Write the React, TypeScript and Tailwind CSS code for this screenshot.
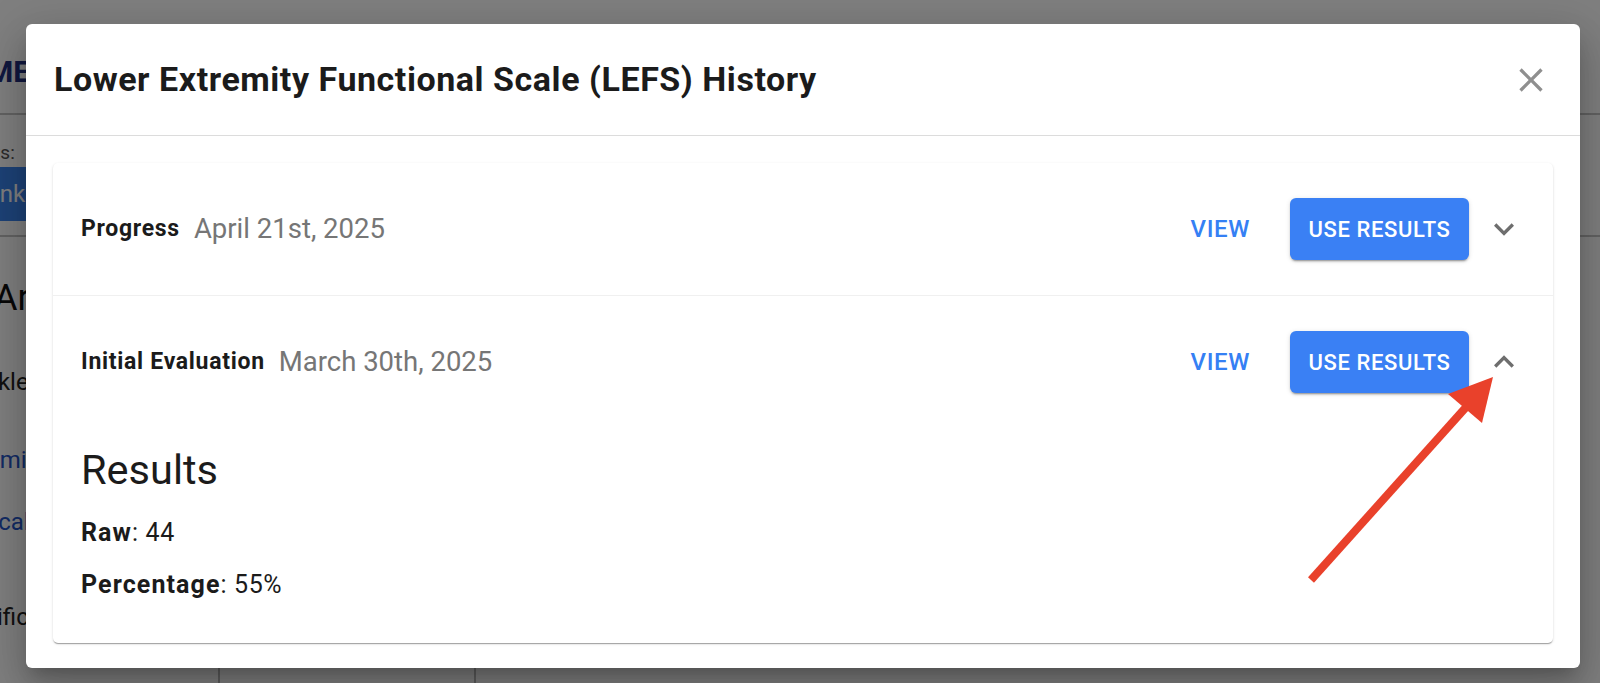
import React from "react";

const ExpandMore = ({ up = false }: { up?: boolean }) => (
  <svg viewBox="0 0 24 24" className={up ? "w-[40px] h-[40px] rotate-180" : "w-[40px] h-[40px]"} fill="#6e6e6e">
    <path d="M16.59 8.59 12 13.17 7.41 8.59 6 10l6 6 6-6z" />
  </svg>
);

const CloseIcon = () => (
  <svg viewBox="0 0 24 24" className="w-[40px] h-[40px]" fill="#8f8f8f">
    <path d="M19 6.41 17.59 5 12 10.59 6.41 5 5 6.41 10.59 12 5 17.59 6.41 19 12 13.41 17.59 19 19 17.59 13.41 12z" />
  </svg>
);

function RowHeader({ label, date, open }: { label: string; date: string; open?: boolean }) {
  return (
    <div className="flex items-center h-[132px] pl-[28px] pr-[29px]">
      <span className="text-[23px] font-bold tracking-[0.7px] text-[#1b1b1b]">{label}</span>
      <span className="ml-[14px] text-[27.5px] text-[#767676]">{date}</span>
      <div className="flex-1" />
      <button className="text-[24px] font-medium tracking-[0.6px] text-[#3580f4]">VIEW</button>
      <button className="ml-[40px] h-[62px] w-[179px] rounded-[6px] bg-[#3a80f4] text-white text-[22px] font-medium tracking-[0.6px] shadow-[0_3px_1px_-2px_rgba(0,0,0,0.2),0_2px_2px_0_rgba(0,0,0,0.14),0_1px_5px_0_rgba(0,0,0,0.12)]">
        USE RESULTS
      </button>
      <div className="ml-[15px] flex items-center justify-center">
        <ExpandMore up={open} />
      </div>
    </div>
  );
}

export default function App() {
  return (
    <div className="relative w-[1600px] h-[683px] overflow-hidden bg-white" style={{ fontFamily: "Roboto, 'Noto Sans', sans-serif" }}>
      {/* background page */}
      <div className="flex flex-col">
        <div className="h-[115px] flex items-center border-b-2 border-[#c4c4c4]">
          <span className="ml-[-13px] mt-[30px] text-[30px] leading-[36px] font-bold text-[#22307e]">MEA</span>
        </div>
        <div className="h-[122px] flex flex-col border-b-2 border-[#c4c4c4]">
          <span className="ml-[-35px] mt-[26px] text-[19px] leading-[24px] text-[#555]">Parts:</span>
          <div className="mt-[2px] h-[54px] w-[60px] flex items-center bg-[#3a84ee] overflow-hidden">
            <span className="ml-[-16px] text-[24px] text-white">Ankle</span>
          </div>
        </div>
        <div className="flex flex-col items-start">
          <span className="ml-[-6px] mt-[39px] text-[36px] leading-[44px] text-[#111]">Arthro</span>
          <span className="ml-[-31px] mt-[46px] text-[24px] leading-[32px] text-[#222]">Ankle</span>
          <span className="ml-[-19px] mt-[46px] text-[24px] leading-[32px] text-[#2657c9]">Limit</span>
          <span className="ml-[-16px] mt-[30px] text-[24px] leading-[32px] text-[#2657c9]">Scale</span>
          <span className="ml-[-56px] mt-[63px] text-[24px] leading-[32px] text-[#222]">Specific</span>
          <div className="ml-[218px] mt-[29px] h-[40px] w-[258px] rounded-[6px] border-2 border-[#bbb]" />
        </div>
      </div>

      {/* overlay */}
      <div className="absolute inset-0 bg-black/50" />

      {/* dialog */}
      <div className="absolute inset-0 pl-[26px] pt-[24px]">
        <div className="w-[1554px] h-[644px] bg-white rounded-[6px] flex flex-col shadow-[0_11px_15px_-7px_rgba(0,0,0,0.2),0_24px_38px_3px_rgba(0,0,0,0.14),0_9px_46px_8px_rgba(0,0,0,0.12)]">
          <div className="h-[112px] flex items-center justify-between pl-[28px] pr-[29px] border-b border-[#dcdcdc]">
            <h2 className="text-[34px] font-bold tracking-[0.55px] text-[#1b1b1b]">Lower Extremity Functional Scale (LEFS) History</h2>
            <CloseIcon />
          </div>
          <div className="px-[27px] pt-[27px]">
            <div className="rounded-[5px] bg-white shadow-[0_2px_1px_-1px_rgba(0,0,0,0.2),0_1px_1px_0_rgba(0,0,0,0.14),0_1px_3px_0_rgba(0,0,0,0.12)]">
              <div className="border-b border-[#f0f0f0]">
                <RowHeader label="Progress" date="April 21st, 2025" />
              </div>
              <RowHeader label="Initial Evaluation" date="March 30th, 2025" open />
              <div className="px-[28px] pt-[18px] pb-[42px] flex flex-col">
                <div className="text-[41.5px] leading-[48px] text-[#1b1b1b]">Results</div>
                <div className="mt-[23px] text-[25px] tracking-[0.6px] leading-[32px] text-[#1b1b1b]">
                  <span className="font-bold tracking-[1.1px]">Raw</span>: 44
                </div>
                <div className="mt-[20px] text-[25px] tracking-[0.6px] leading-[32px] text-[#1b1b1b]">
                  <span className="font-bold tracking-[1.1px]">Percentage</span>: 55%
                </div>
              </div>
            </div>
          </div>
        </div>
      </div>

      {/* annotation arrow */}
      <svg className="absolute inset-0 pointer-events-none" width="1600" height="683" viewBox="0 0 1600 683">
        <line x1="1311" y1="580" x2="1468" y2="405" stroke="#e9412b" strokeWidth="8" />
        <polygon points="1493,377 1448,394 1482,423" fill="#e9412b" />
      </svg>
    </div>
  );
}
